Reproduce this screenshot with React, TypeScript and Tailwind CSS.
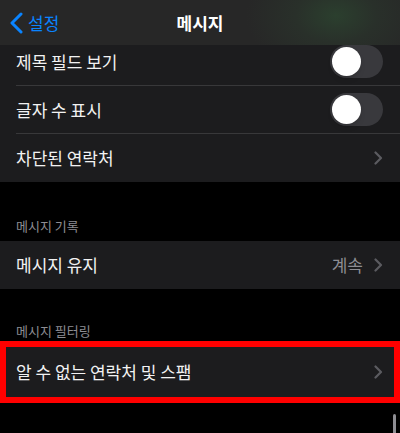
import React from "react"

type ToggleProps = {
  on?: boolean,
}

function Toggle({ on = false }: ToggleProps) {
  return (
    <div className={`w-[53px] h-[33px] rounded-full p-[2px] flex ${on ? "bg-[#30d158] justify-end" : "bg-[#39393d] justify-start"}`}>
      <div className="w-[29px] h-[29px] rounded-full bg-white shadow-md" />
    </div>
  )
}

function Chevron() {
  return (
    <svg width="9" height="14" viewBox="0 0 9 14" fill="none">
      <path d="M1.5 1.5 L7 7 L1.5 12.5" stroke="#5b5b60" strokeWidth="2.2" strokeLinecap="round" strokeLinejoin="round" />
    </svg>
  )
}

type RowProps = {
  label: string,
  right?: React.ReactNode,
  divider?: boolean,
  height?: string,
}

function Row({ label, right, divider = false, height = "h-[48px]" }: RowProps) {
  return (
    <div className="bg-[#1c1c1e] pl-4">
      <div className={`${height} flex items-center pr-[17px] ${divider ? "border-b border-[#38383a]" : ""}`}>
        <span className="grow text-[17px] text-[#f2f2f2]">{label}</span>
        {right}
      </div>
    </div>
  )
}

function SectionHeader({ title, className = "" }: { title: string, className?: string }) {
  return (
    <div className={`${className} flex items-end px-4 text-[13px] leading-[16px] text-[#8d8d93]`}>
      {title}
    </div>
  )
}

export default function App() {
  return (
    <div
      className="relative w-[400px] h-[433px] overflow-hidden bg-black"
      style={{ fontFamily: '"Noto Sans CJK KR", "Noto Sans", sans-serif' }}
    >
      {/* translucent nav bar over the list */}
      <div className="absolute top-0 left-0 right-0 z-10 h-[45px] bg-[radial-gradient(ellipse_90px_60px_at_84%_35%,#2b3f2e_0%,#29302a_45%,#272727_100%)] flex items-center">
        <div className="flex items-center pl-[9px] gap-[5px] text-[#0a84ff]">
          <svg width="14" height="22" viewBox="0 0 14 22" fill="none">
            <path d="M12 2 L3 11 L12 20" stroke="#0a84ff" strokeWidth="3" strokeLinecap="round" strokeLinejoin="round" />
          </svg>
          <span className="text-[17px] leading-none">설정</span>
        </div>
        <div className="absolute left-0 right-0 text-center text-[17px] font-semibold text-white pointer-events-none">
          메시지
        </div>
      </div>

      <div className="pt-[38px] flex flex-col">
        <Row label="제목 필드 보기" divider right={<Toggle />} />
        <Row label="글자 수 표시" divider right={<Toggle />} />
        <Row label="차단된 연락처" right={<Chevron />} />

        <SectionHeader title="메시지 기록" className="h-[59px] pb-[7px]" />
        <Row label="메시지 유지" right={
          <div className="flex items-center gap-[11px]">
            <span className="text-[17px] text-[#8d8d93]">계속</span>
            <Chevron />
          </div>
        } />

        <SectionHeader title="메시지 필터링" className="h-[52px] pb-[2px]" />
        <div className="border-[6px] border-[#ff0000]">
          <div className="bg-[#1c1c1e] pl-[10px]">
            <div className="h-[50px] flex items-center pr-[11px]">
              <span className="grow text-[17px] text-[#f2f2f2]">알 수 없는 연락처 및 스팸</span>
              <Chevron />
            </div>
          </div>
        </div>
      </div>

      <div className="absolute left-[393px] top-[414px] w-[3px] h-[30px] rounded-full bg-[#8e8e93]" />
    </div>
  )
}
